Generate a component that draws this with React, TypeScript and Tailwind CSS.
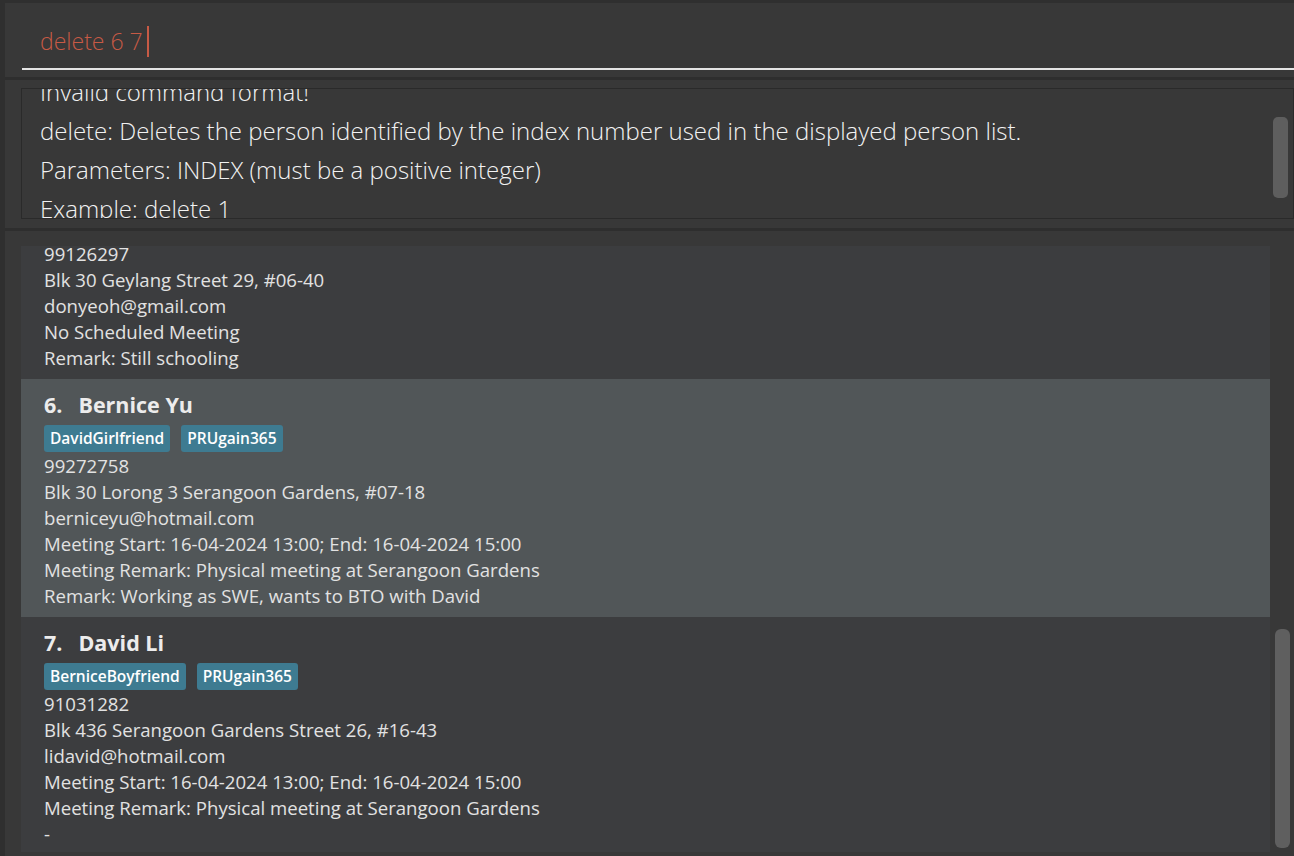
import React from "react";

type Person = {
  idx: number;
  name: string;
  tags: string[];
  lines: string[];
  selected?: boolean;
};

const people: Person[] = [
  {
    idx: 5,
    name: "Don Yeoh",
    tags: ["friends"],
    lines: [
      "99126297",
      "Blk 30 Geylang Street 29, #06-40",
      "donyeoh@gmail.com",
      "No Scheduled Meeting",
      "Remark: Still schooling",
    ],
  },
  {
    idx: 6,
    name: "Bernice Yu",
    tags: ["DavidGirlfriend", "PRUgain365"],
    lines: [
      "99272758",
      "Blk 30 Lorong 3 Serangoon Gardens, #07-18",
      "berniceyu@hotmail.com",
      "Meeting Start: 16-04-2024 13:00; End: 16-04-2024 15:00",
      "Meeting Remark: Physical meeting at Serangoon Gardens",
      "Remark: Working as SWE, wants to BTO with David",
    ],
    selected: true,
  },
  {
    idx: 7,
    name: "David Li",
    tags: ["BerniceBoyfriend", "PRUgain365"],
    lines: [
      "91031282",
      "Blk 436 Serangoon Gardens Street 26, #16-43",
      "lidavid@hotmail.com",
      "Meeting Start: 16-04-2024 13:00; End: 16-04-2024 15:00",
      "Meeting Remark: Physical meeting at Serangoon Gardens",
      "-",
    ],
  },
];

function Card({ p, first }: { p: Person; first?: boolean }) {
  return (
    <div
      className={`${p.selected ? "bg-[#515658]" : "bg-[#3c3d3f]"} ${
        first ? "-mt-[79px]" : ""
      } pl-[23px] pt-[11px] pb-[8px]`}
    >
      <div className="flex items-center h-[30px] gap-[16px] text-[21.5px] font-bold text-[#ececec] leading-[30px]">
        <span>{p.idx}.</span>
        <span>{p.name}</span>
      </div>
      <div className="flex gap-[11px] mt-[5px] mb-[1px]">
        {p.tags.map((t) => (
          <span
            key={t}
            className="h-[27px] px-[6px] rounded-[3px] bg-[#3e7b91] text-white text-[15.5px] font-semibold leading-[27px]"
          >
            {t}
          </span>
        ))}
      </div>
      {p.lines.map((l, i) => (
        <div key={i} className="text-[18.6px] leading-[26px] text-[#e2e2e2] whitespace-nowrap">
          {l}
        </div>
      ))}
    </div>
  );
}

export default function App() {
  return (
    <div
      className="w-[1294px] h-[856px] overflow-hidden bg-[#2f2f2f] pl-[5px] pt-[3px] flex flex-col"
      style={{ fontFamily: '"Open Sans", "Noto Sans", sans-serif' }}
    >
      {/* command box */}
      <div className="h-[74px] shrink-0 bg-[#383838] pl-[17px] flex flex-col">
        <div className="h-[65px] flex items-center pl-[18px] pt-[12px]">
          <span className="text-[23px] font-light text-[#c75a45] leading-none">
            delete 6 7
          </span>
          <span className="w-[2px] h-[31px] bg-[#c75a45] ml-[4px]" />
        </div>
        <div className="h-[2px] bg-[#e4e4e4]" />
      </div>
      <div className="h-[3px] shrink-0 bg-[#2e2e2e]" />
      {/* result display */}
      <div className="h-[148px] shrink-0 bg-[#383838] pl-[16px] pt-[8px] pb-[9px] flex">
        <div className="flex-1 border border-[#2a2a2a] overflow-hidden relative">
          <div className="-mt-[17px] pl-[18px] text-[24px] font-light text-[#f2f2f2] leading-[39px] whitespace-nowrap">
            <div>Invalid command format!</div>
            <div>
              delete: Deletes the person identified by the index number used in
              the displayed person list.
            </div>
            <div>Parameters: INDEX (must be a positive integer)</div>
            <div>Example: delete 1</div>
          </div>
          <div className="absolute right-[5px] top-[28px] w-[15px] h-[81px] rounded-[5px] bg-[#5e5e5e]" />
        </div>
      </div>
      <div className="h-[3px] shrink-0 bg-[#2e2e2e]" />
      {/* person list */}
      <div className="flex-1 bg-[#383838] pl-[16px] pt-[15px] flex min-h-0">
        <div className="flex-1 overflow-hidden h-[606px]">
          {people.map((p, i) => (
            <Card key={p.idx} p={p} first={i === 0} />
          ))}
        </div>
        <div className="w-[24px] relative">
          <div className="absolute left-[5px] top-[383px] w-[15px] h-[219px] rounded-[6px] bg-[#5f5f5f]" />
        </div>
      </div>
    </div>
  );
}
